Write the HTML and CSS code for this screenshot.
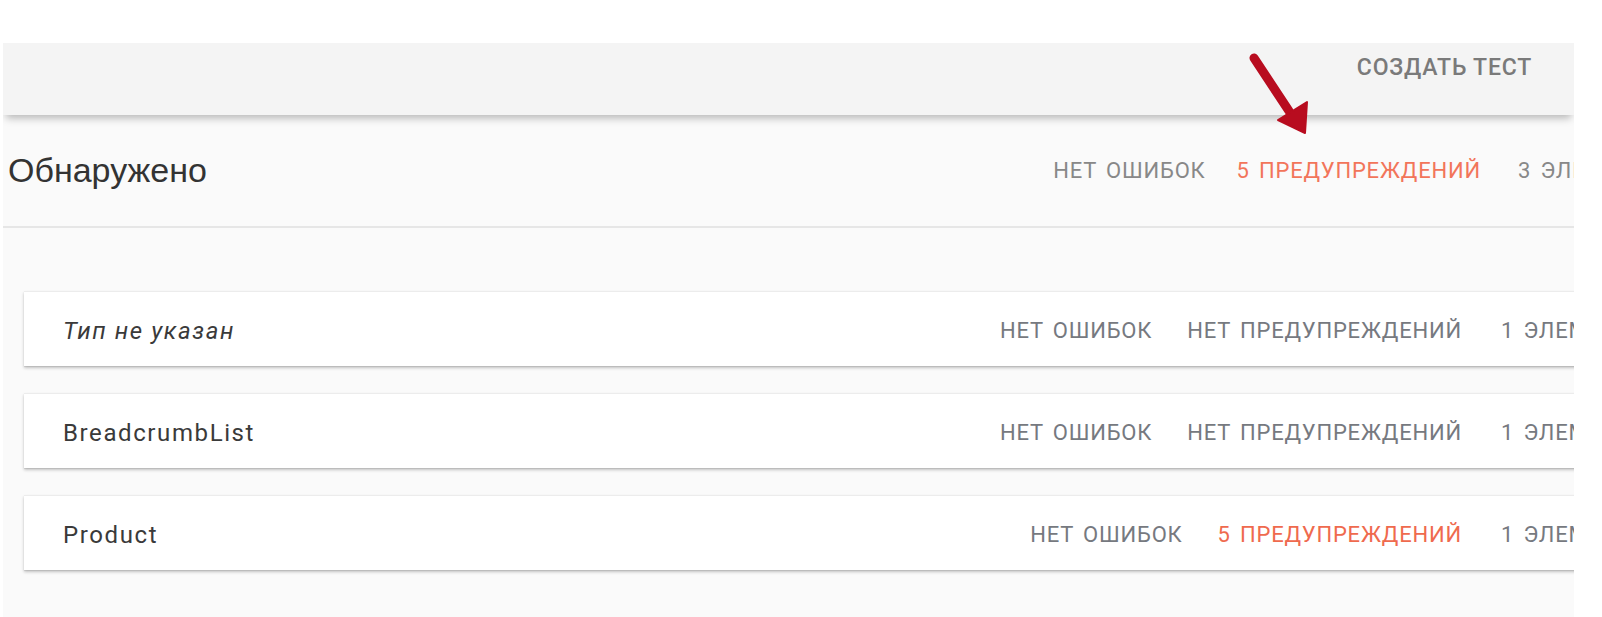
FILE: index.html
```html
<!DOCTYPE html>
<html lang="ru">
<head>
<meta charset="utf-8">
<title>Обнаружено</title>
<link rel="stylesheet" href="styles.css">
</head>
<body>
<div class="page">
  <header class="toolbar">
    <span class="toolbar-btn">СОЗДАТЬ ТЕСТ</span>
  </header>
  <section class="summary">
    <div class="summary-head">
      <h1 class="title">Обнаружено</h1>
      <div class="stats stats-head">
        <span class="stat">НЕТ ОШИБОК</span>
        <span class="stat warn">5 ПРЕДУПРЕЖДЕНИЙ</span>
        <span class="stat count">3 ЭЛЕМЕНТА</span>
      </div>
    </div>
    <div class="list">
      <div class="card">
        <span class="name italic">Тип не указан</span>
        <div class="stats">
          <span class="stat">НЕТ ОШИБОК</span>
          <span class="stat">НЕТ ПРЕДУПРЕЖДЕНИЙ</span>
          <span class="stat count">1 ЭЛЕМЕНТ</span>
        </div>
      </div>
      <div class="card">
        <span class="name">BreadcrumbList</span>
        <div class="stats">
          <span class="stat">НЕТ ОШИБОК</span>
          <span class="stat">НЕТ ПРЕДУПРЕЖДЕНИЙ</span>
          <span class="stat count">1 ЭЛЕМЕНТ</span>
        </div>
      </div>
      <div class="card">
        <span class="name">Product</span>
        <div class="stats">
          <span class="stat">НЕТ ОШИБОК</span>
          <span class="stat warn">5 ПРЕДУПРЕЖДЕНИЙ</span>
          <span class="stat count">1 ЭЛЕМЕНТ</span>
        </div>
      </div>
    </div>
  </section>
</div>
<svg class="arrow" width="80" height="95" viewBox="0 0 80 95" aria-hidden="true">
  <line x1="14" y1="13" x2="49" y2="66" stroke="#b80c1f" stroke-width="9" stroke-linecap="round"/>
  <polygon points="38,75 67,57 65,88" fill="#b80c1f" stroke="#b80c1f" stroke-width="2" stroke-linejoin="round"/>
</svg>
</body>
</html>
```
FILE: styles.css
```css
html, body {
  margin: 0;
  padding: 0;
  background: #ffffff;
}
body {
  position: relative;
  height: 617px;
  overflow: hidden;
  font-family: Roboto, "Liberation Sans", Arial, sans-serif;
}
.page {
  margin: 43px 0 0 3px;
  width: 1571px;
  height: 574px;
  overflow: hidden;
  background: #fafafa;
}
.toolbar {
  position: relative;
  z-index: 1;
  height: 72px;
  box-sizing: border-box;
  background: #f4f4f4;
  box-shadow: 0 6px 8px -3px rgba(0, 0, 0, 0.28);
  display: flex;
  align-items: flex-start;
  justify-content: flex-end;
  padding: 13px 42px 0 0;
}
.toolbar-btn {
  font-family: Roboto, "Liberation Sans", sans-serif;
  font-weight: 500;
  font-size: 23px;
  line-height: 24px;
  letter-spacing: 0.8px;
  color: #7a7a7a;
  white-space: nowrap;
}
.summary {
  width: 1665px;
}
.summary-head {
  height: 111px;
  border-bottom: 2px solid #e6e6e6;
  display: flex;
  align-items: center;
  justify-content: space-between;
  padding-left: 5px;
}
.title {
  margin: 0;
  font-family: "Liberation Sans", Arial, sans-serif;
  font-weight: 400;
  font-size: 34px;
  color: #333333;
}
.stats {
  display: flex;
  align-items: center;
  gap: 35px;
  white-space: nowrap;
  flex-shrink: 0;
}
.stats-head {
  gap: 31px;
}
.stat {
  font-family: Roboto, "Liberation Sans", sans-serif;
  font-size: 22px;
  letter-spacing: 0.8px;
  word-spacing: 3px;
  color: #767980;
}
.stats-head .stat {
  color: #888888;
}
.stat.warn {
  color: #ef6a4e;
}
.stats-head .stat.warn {
  color: #f2755a;
}
.stat.count {
  width: 150px;
  margin-left: 4px;
}
.stats-head .stat.count {
  margin-left: 6px;
}
.list {
  padding: 63px 17px 0 21px;
  display: flex;
  flex-direction: column;
  gap: 27px;
}
.card {
  height: 75px;
  box-sizing: border-box;
  background: #ffffff;
  border-top: 1px solid #ececec;
  box-shadow: 0 2px 3px rgba(0, 0, 0, 0.22), 0 1px 1px rgba(0, 0, 0, 0.08);
  display: flex;
  align-items: center;
  justify-content: space-between;
  padding: 3px 0 0 39px;
}
.name {
  font-family: Roboto, "Liberation Sans", sans-serif;
  font-size: 24px;
  letter-spacing: 1.6px;
  color: #3a3a3a;
  white-space: nowrap;
}
.name.italic {
  font-style: italic;
}
.arrow {
  position: absolute;
  left: 1240px;
  top: 45px;
  z-index: 2;
}
```
